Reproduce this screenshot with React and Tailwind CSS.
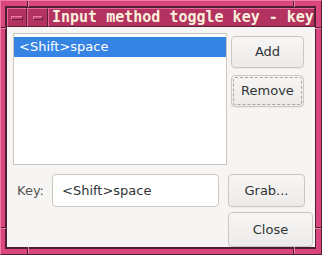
import React from 'react'

// Motif-style frame colours
const notchV = 'absolute w-[2px] border-l border-r border-l-[#4d1f33] border-r-[#f07aa8]'
const notchH = 'absolute h-[2px] border-t border-b border-t-[#4d1f33] border-b-[#f07aa8]'

function TitleButton({ width, barWidth }) {
  return (
    <div className={`${width} h-full flex items-center justify-center bg-[#b3325f] border-t border-l border-t-[#e7679a] border-l-[#e7679a] border-b border-r border-b-[#5a2038] border-r-[#5a2038]`}>
      <span className={`${barWidth} h-[4px] bg-[#c9457a] border-t border-l border-[#f07aa8] border-b border-r border-b-[#5a2038] border-r-[#5a2038]`} />
    </div>
  )
}

function Button({ children, className = '' }) {
  return (
    <button
      className={`flex items-center justify-center rounded-[4px] border border-[#cdc7c2] bg-gradient-to-b from-[#f7f6f5] to-[#edebe9] text-[13px] text-[#2e3436] shadow-[0_1px_0_rgba(0,0,0,0.04)] ${className}`}
    >
      {children}
    </button>
  )
}

export default function App() {
  return (
    <div
      className="relative w-[322px] h-[255px] flex flex-col bg-[#d9467e] border-t border-l border-t-[#f07aa8] border-l-[#f07aa8] border-b border-r border-b-[#4d1f33] border-r-[#4d1f33] pt-[5px] pl-[4px] pr-[5px] pb-[5px]"
      style={{ fontFamily: '"DejaVu Sans", sans-serif' }}
    >
      {/* resize handle notches */}
      <span className={`${notchV} left-[26px] top-0 h-[6px]`} />
      <span className={`${notchV} left-[292px] top-0 h-[6px]`} />
      <span className={`${notchV} left-[26px] bottom-0 h-[7px]`} />
      <span className={`${notchV} left-[292px] bottom-0 h-[7px]`} />
      <span className={`${notchH} top-[26px] left-0 w-[5px]`} />
      <span className={`${notchH} top-[226px] left-0 w-[5px]`} />
      <span className={`${notchH} top-[26px] right-0 w-[6px]`} />
      <span className={`${notchH} top-[226px] right-0 w-[6px]`} />

      <div className="flex-1 flex flex-col border-t-2 border-l-2 border-b-2 border-r border-[#4d1f33] bg-[#f6f5f4]">
        {/* title bar */}
        <div className="flex h-[19px] shrink-0">
          <TitleButton width="w-[20px]" barWidth="w-[12px]" />
          <TitleButton width="w-[21px]" barWidth="w-[10px]" />
          <div className="flex-1 min-w-0 bg-[#b3325f] border-t border-l border-t-[#e7679a] border-l-[#e7679a] border-b border-r border-b-[#5a2038] border-r-[#5a2038] overflow-hidden">
            <div
              className="pl-[3px] text-[15px] leading-[17px] font-bold text-[#fbf0dc] whitespace-nowrap"
              style={{ fontFamily: '"DejaVu Sans Mono", monospace' }}
            >
              Input method toggle key - key
            </div>
          </div>
        </div>

        {/* dialog body */}
        <div className="flex-1 flex flex-col pl-[6px] pt-[6px]">
          <div className="flex h-[132px]">
            <div className="w-[214px] h-full bg-white border border-[#cdc7c2] pt-[3px]">
              <div className="h-[20px] bg-[#3584e4] text-white text-[13px] leading-[20px] pl-[5px]">
                &lt;Shift&gt;space
              </div>
            </div>
            <div className="ml-[4px] w-[73px] flex flex-col gap-[7px] pt-[3px]">
              <Button className="h-[32px]">Add</Button>
              <Button className="h-[32px] outline-1 outline-dashed outline-[#a8a6a3] -outline-offset-3">Remove</Button>
            </div>
          </div>

          <div className="flex items-center mt-[9px]">
            <div className="w-[39px] pl-[4px] text-[13px] text-[#555753]">Key:</div>
            <div className="w-[167px] h-[33px] flex items-center rounded-[4px] border border-[#cdc7c2] bg-white pl-[9px] text-[13px] text-[#2e3436]">
              &lt;Shift&gt;space
            </div>
            <Button className="ml-[9px] w-[77px] h-[33px]">Grab...</Button>
          </div>

          <div className="flex mt-[5px]">
            <Button className="ml-[215px] w-[85px] h-[35px]">Close</Button>
          </div>
        </div>
      </div>
    </div>
  )
}
